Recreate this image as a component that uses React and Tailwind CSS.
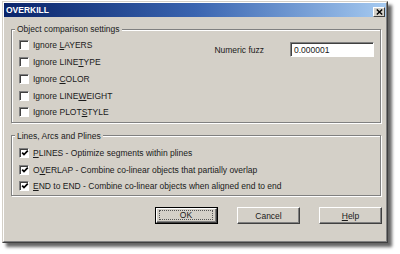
import React from "react";

const FONT = { fontFamily: '"Liberation Sans", Arial, sans-serif' };

function Box({ checked }) {
  return (
    <span className="relative block w-[10px] h-[10px] shrink-0 border border-t-[#808080] border-l-[#808080] border-r-white border-b-white bg-white shadow-[inset_1px_1px_0_#404040]">
      {checked && (
        <svg className="absolute left-[1px] top-[0px]" width="8" height="8" viewBox="0 0 8 8">
          <polyline points="1.2,3.6 3,5.6 6.8,1.6" fill="none" stroke="#000" strokeWidth="1.7" />
        </svg>
      )}
    </span>
  );
}

function Row({ checked, children, h }) {
  return (
    <div className={`flex items-center gap-[4px] ${h}`}>
      <Box checked={checked} />
      <span className="whitespace-nowrap">{children}</span>
    </div>
  );
}

function U({ children }) {
  return <span className="underline underline-offset-[1px] decoration-[1px]">{children}</span>;
}

function Btn({ children, def }) {
  if (def) {
    return (
      <div className="w-[63px] h-[17px] border border-black">
        <div className="w-full h-full border border-t-white border-l-white border-r-[#404040] border-b-[#404040] shadow-[inset_-1px_-1px_0_#808080] flex items-center justify-center pt-[1px] pl-[2px] pr-[3px] pb-[2px]">
          <div className="w-full h-full border border-dotted border-[#555] flex items-center justify-center leading-none">
            {children}
          </div>
        </div>
      </div>
    );
  }
  return (
    <div className="w-[63px] h-[17px] border border-t-white border-l-white border-r-[#404040] border-b-[#404040] shadow-[inset_-1px_-1px_0_#808080] flex items-center justify-center leading-none">
      {children}
    </div>
  );
}

export default function App() {
  return (
    <div className="w-[400px] h-[254px] bg-white pt-[1px] pl-[2px] text-[8.5px] leading-[12px] text-[#1a1a1a]" style={FONT}>
      <div className="w-[386px] h-[242px] bg-[#d4d0c8] border border-t-[#d4d0c8] border-l-[#d4d0c8] border-r-[#404040] border-b-[#404040] shadow-[4px_4px_3px_rgba(0,0,0,0.6)]">
        <div className="w-full h-full border border-t-white border-l-white border-r-[#808080] border-b-[#808080] flex flex-col">
          {/* Title bar */}
          <div className="h-[14px] shrink-0 flex items-end justify-between pl-[2px] pr-[1px] bg-gradient-to-r from-[#0a246a] via-[#3a64b0] to-[#a6caf0]">
            <span className="self-center text-white font-bold text-[8.5px]">OVERKILL</span>
            <div className="w-[12px] h-[10px] bg-[#d4d0c8] border border-t-white border-l-white border-r-[#404040] border-b-[#404040] flex items-center justify-center">
              <svg width="7" height="6" viewBox="0 0 7 6">
                <path d="M0.8 0.5 L6.2 5.5 M6.2 0.5 L0.8 5.5" stroke="#000" strokeWidth="1.4" />
              </svg>
            </div>
          </div>

          {/* Body */}
          <div className="flex flex-col pt-[6px] pl-[7px] pr-[5px]">
            <fieldset className="w-[370px] border border-[#808080] shadow-[inset_1px_1px_0_#fff,1px_1px_0_#fff]">
              <legend className="ml-[3px] px-[2px] bg-[#d4d0c8] leading-[12px]">Object comparison settings</legend>
              <div className="flex pt-[2px] pb-[1px] pl-[7px] pr-[6px]">
                <div className="flex flex-col flex-1">
                  <Row h="h-[16.75px]">Ignore <U>L</U>AYERS</Row>
                  <Row h="h-[16.75px]">Ignore LINE<U>T</U>YPE</Row>
                  <Row h="h-[16.75px]">Ignore <U>C</U>OLOR</Row>
                  <Row h="h-[16.75px]">Ignore LINE<U>W</U>EIGHT</Row>
                  <Row h="h-[16.75px]">Ignore PLOT<U>S</U>TYLE</Row>
                </div>
                <div className="flex items-center gap-[26px] self-start mt-[5px]">
                  <span>Numeric fuzz</span>
                  <div className="w-[84px] h-[15px] border border-t-[#808080] border-l-[#808080] border-r-white border-b-white bg-white shadow-[inset_1px_1px_0_#404040] flex items-center pl-[3px]">
                    0.000001
                  </div>
                </div>
              </div>
            </fieldset>

            <fieldset className="w-[370px] mt-[7px] border border-[#808080] shadow-[inset_1px_1px_0_#fff,1px_1px_0_#fff]">
              <legend className="ml-[3px] px-[2px] bg-[#d4d0c8] leading-[12px]">Lines, Arcs and Plines</legend>
              <div className="flex flex-col pt-[3px] pb-[1px] pl-[7px]">
                <Row checked h="h-[16.5px]"><U>P</U>LINES - Optimize segments within plines</Row>
                <Row checked h="h-[16.5px]">O<U>V</U>ERLAP - Combine co-linear objects that partially overlap</Row>
                <Row checked h="h-[16.5px]"><U>E</U>ND to END - Combine co-linear objects when aligned end to end</Row>
              </div>
            </fieldset>

            <div className="flex justify-end gap-[19px] mt-[11px] w-[371px]">
              <Btn def>OK</Btn>
              <Btn>Cancel</Btn>
              <Btn><U>H</U>elp</Btn>
            </div>
          </div>
        </div>
      </div>
    </div>
  );
}
